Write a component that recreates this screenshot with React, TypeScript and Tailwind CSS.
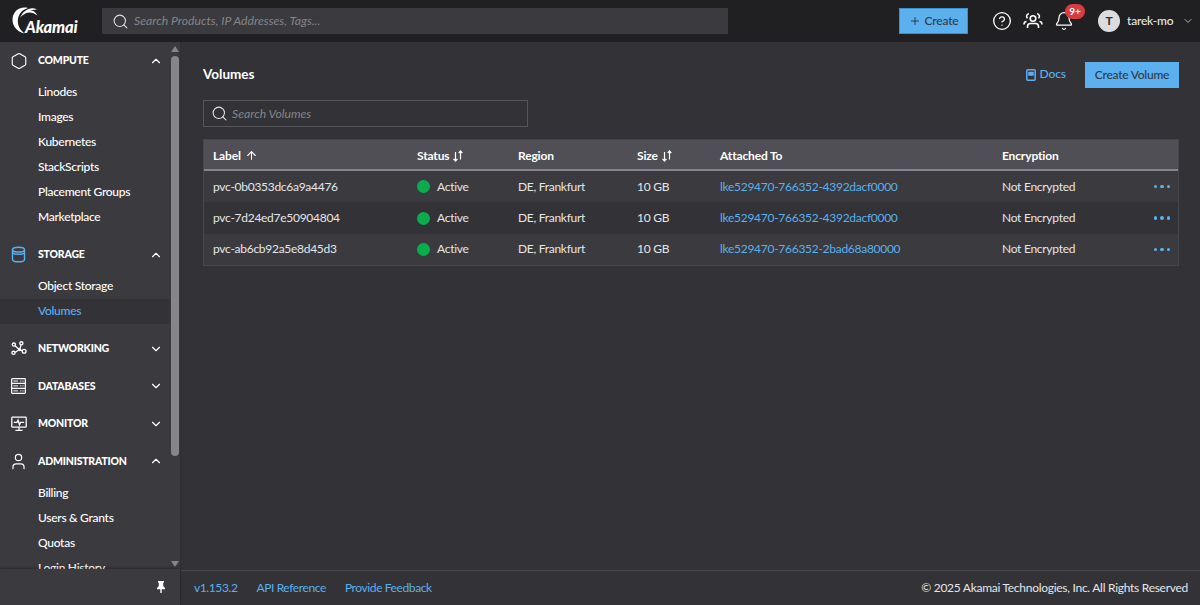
import React from 'react';
import { Search, Hexagon, ChevronUp, ChevronDown, Plus, CircleHelp, Bell, ArrowUp, User } from 'lucide-react';

const font = "font-['Lato',sans-serif]";

const rows = [
  { label: 'pvc-0b0353dc6a9a4476', attached: 'lke529470-766352-4392dacf0000' },
  { label: 'pvc-7d24ed7e50904804', attached: 'lke529470-766352-4392dacf0000' },
  { label: 'pvc-ab6cb92a5e8d45d3', attached: 'lke529470-766352-2bad68a80000' },
];

const SortIcon = () => (
  <svg width="12" height="12" viewBox="0 0 12 12" fill="none" stroke="currentColor" strokeWidth="1.2" className="ml-[3px]">
    <path d="M3.500 2v9M1.500 8.800l2 2.200 2-2.200" />
    <path d="M8.500 9.500V1M6.800 3L8.500 1l1.800 2" />
  </svg>
);

const Logo = () => (
  <div className="relative w-[66px] h-[36px]">
    <svg width="36" height="36" viewBox="0 0 36 36" className="absolute left-0 top-0" fill="#fff">
      <path d="M16 5C7 3 .5 9 .5 17 .5 24 6 29 12.500 30.500 8 27 5 22 6 16 7 10 11 6.500 16 5z" />
      <path d="M25 6.500C19 3 11 7 8 15 12 9.500 18 6.500 25 6.500z" />
      <path d="M25.500 12.500C22 6 14 5 10 13 14.500 8.500 20 8.500 25.500 12.500z" />
    </svg>
    <span className="absolute left-[13px] top-[13px] text-[16.500px] leading-[22px] font-black italic text-white tracking-[-0.2px]">
      Akamai
    </span>
  </div>
);

const StorageIcon = () => (
  <svg width="15" height="17" viewBox="0 0 20 22" fill="none" stroke="#5cb0ee" strokeWidth="1.900">
    <ellipse cx="10" cy="4.500" rx="8" ry="3.200" />
    <path d="M2 4.500v13c0 1.800 3.500 3.200 8 3.200s8-1.400 8-3.200v-13" />
    <path d="M2 9c1.500 1.200 5 1.800 8 1.800s6.500-.6 8-1.800" fill="#5cb0ee" fillOpacity=".25" />
  </svg>
);

const NetworkIcon = () => (
  <svg width="16" height="15" viewBox="0 0 20 19" fill="none" stroke="#fff" strokeWidth="1.700">
    <circle cx="3.500" cy="4.500" r="2" />
    <circle cx="13" cy="3" r="2" />
    <circle cx="3" cy="15" r="2" />
    <circle cx="16.500" cy="13" r="2.400" />
    <path d="M5 6l5.500 5M12.500 5l-1.500 6M5 14.500l5-3.500M11 11l3.500 1.500" />
    <circle cx="10.800" cy="11" r="1" fill="#fff" />
  </svg>
);

const DatabaseIcon = () => (
  <svg width="15" height="16" viewBox="0 0 16 17" fill="none" stroke="#fff" strokeWidth="1.300">
    <rect x=".7" y=".7" width="14.600" height="15.600" rx=".8" />
    <path d="M.7 5.800h14.600M.7 11h14.600" />
    <path d="M2.500 3.200h5M2.500 8.400h5M2.500 13.700h5" strokeWidth="1" />
    <path d="M10 3.200h1M12.300 3.200h1M10 8.400h1M12.300 8.400h1M10 13.700h1M12.300 13.700h1" strokeWidth="1.400" />
  </svg>
);

const MonitorIcon = () => (
  <svg width="16" height="16" viewBox="0 0 20 19" fill="none" stroke="#fff" strokeWidth="1.600">
    <rect x="1" y="1" width="18" height="12.500" rx="1" />
    <path d="M10 13.500v3.500M5.500 17.500h9" />
    <path d="M3.500 7.500h4l1.300-3 1.800 6 1.300-3h4.500" />
  </svg>
);

const PeopleIcon = () => (
  <svg width="20" height="18" viewBox="0 0 20 18" fill="none" stroke="#fff" strokeWidth="1.600">
    <circle cx="10" cy="6.500" r="2.800" />
    <path d="M4.500 16v-1.500c0-1.800 1.500-3 3-3h5c1.500 0 3 1.200 3 3V16" />
    <path d="M6 1.800a2.600 2.600 0 0 0-1.500 4.600M14 1.800a2.600 2.600 0 0 1 1.500 4.600M1 12.500c0-1.800 1-3 2.500-3M19 12.500c0-1.800-1-3-2.500-3" />
  </svg>
);

const DocsIcon = () => (
  <svg width="10" height="12" viewBox="0 0 10 12" fill="none" stroke="#5cb0ee" strokeWidth="1.500">
    <rect x=".8" y=".8" width="8.400" height="10.400" rx="1" />
    <path d="M3 3.500h4v2.500H3z" fill="#5cb0ee" />
  </svg>
);

const PinIcon = () => (
  <svg width="10" height="12" viewBox="0 0 10 12" fill="#fff">
    <path d="M2 0h6v1.200L7.200 2v3L9 7v1.300H5.700V12H4.300V8.300H1V7l1.800-2V2L2 1.200z" />
  </svg>
);

type NavGroupProps = {
  title: string;
  icon: React.ReactNode;
  open?: boolean;
  items?: string[];
  active?: string;
};

const NavGroup = ({ title, icon, open, items, active }: NavGroupProps) => (
  <div>
    <div className="flex items-center h-[37.500px] pl-[8.500px] pr-[7px]">
      <span className="w-[20px] h-[22px] flex items-center justify-center shrink-0">{icon}</span>
      <span className="ml-[9.500px] pt-[1px] flex-1 text-[10.500px] font-black text-white tracking-[-0.2px]">{title}</span>
      {open ? <ChevronUp size={14} className="text-white" /> : <ChevronDown size={14} className="text-white" />}
    </div>
    {items && (
      <div className="pb-[6.500px]">
        {items.map((item) => (
          <div
            key={item}
            className={`h-[25px] pl-[38px] flex items-center text-[12px] tracking-[-0.28px] font-medium whitespace-nowrap ${
              item === active ? 'bg-[#323237] text-[#5cb0ee]' : 'text-white'
            }`}
          >
            {item}
          </div>
        ))}
      </div>
    )}
  </div>
);

const Sidebar = () => (
  <aside className="w-[181px] shrink-0 bg-[#3a3a3f] border-r border-[#2f2f33] flex flex-col min-h-0">
    <div className="flex-1 flex min-h-0">
      <nav className="flex-1 min-w-0 overflow-hidden">
        <NavGroup
          title="COMPUTE"
          open
          icon={<Hexagon size={18} strokeWidth={1.500} className="text-white" />}
          items={['Linodes', 'Images', 'Kubernetes', 'StackScripts', 'Placement Groups', 'Marketplace']}
        />
        <NavGroup title="STORAGE" open icon={<StorageIcon />} items={['Object Storage', 'Volumes']} active="Volumes" />
        <NavGroup title="NETWORKING" icon={<NetworkIcon />} />
        <NavGroup title="DATABASES" icon={<DatabaseIcon />} />
        <NavGroup title="MONITOR" icon={<MonitorIcon />} />
        <NavGroup
          title="ADMINISTRATION"
          open
          icon={<User size={19} strokeWidth={1.500} className="text-white" />}
          items={['Billing', 'Users & Grants', 'Quotas', 'Login History']}
        />
      </nav>
      <div className="w-[10px] shrink-0 flex flex-col items-center pr-[1px]">
        <div className="mt-[4px] w-0 h-0 border-x-[4px] border-x-transparent border-b-[6px] border-b-[#85858a]" />
        <div className="mt-[4px] w-[8px] h-[400px] rounded bg-[#85858a]" />
        <div className="mt-auto mb-[2px] w-0 h-0 border-x-[4px] border-x-transparent border-t-[6px] border-t-[#85858a]" />
      </div>
    </div>
    <div className="h-[36px] shrink-0 bg-[#3a3a3f] shadow-[0_-1px_3px_rgba(0,0,0,0.3)] flex items-center justify-end pr-[14px] relative">
      <PinIcon />
    </div>
  </aside>
);

const Header = () => (
  <header className="h-[42px] shrink-0 bg-[#202023] flex items-center">
    <div className="w-[102px] pl-[12px] shrink-0">
      <Logo />
    </div>
    <div className="w-[626px] h-[26px] bg-[#3a3a3f] flex items-center pl-[10px]">
      <Search size={17} strokeWidth={1.500} className="text-[#e0e0e3]" />
      <span className="ml-[5px] text-[12.200px] italic text-[#85858a]">Search Products, IP Addresses, Tags...</span>
    </div>
    <div className="flex-1 flex items-center">
      <button className="ml-[171px] w-[69px] h-[26px] bg-[#5cb0ee] border border-[#3f8fd0] text-[#2d3a48] text-[12px] tracking-[-0.2px] font-medium flex items-center justify-center">
        <Plus size={12} className="mr-[4px]" />
        Create
      </button>
      <CircleHelp size={20} strokeWidth={1.600} className="ml-[24px] text-white" />
      <span className="ml-[11px]">
        <PeopleIcon />
      </span>
      <span className="relative ml-[11px] flex">
        <Bell size={20} strokeWidth={1.500} className="text-white" />
        <span className="absolute left-[11px] top-[-7px] h-[15px] w-[20px] rounded-full bg-[#d63c42] text-white text-[10px] font-bold flex items-center justify-center">
          9+
        </span>
      </span>
      <span className="ml-[24px] w-[22px] h-[22px] rounded-full bg-[#dcdce0] text-[#2d2d32] text-[12px] font-bold flex items-center justify-center">
        T
      </span>
      <span className="ml-[7px] text-[12px] tracking-[-0.2px] font-medium text-[#e6e6e9] whitespace-nowrap">tarek-mo</span>
      <ChevronDown size={12} className="ml-[9px] text-[#b0b0b5]" />
    </div>
  </header>
);

const cols = 'grid grid-cols-[204px_100px_119px_83px_282px_1fr] items-center';

const VolumesTable = () => (
  <div className="border border-[#46464b]">
    <div className={`${cols} h-[31px] pt-[2px] bg-[#4f4f55] border-b-2 border-[#85858a] text-[12px] tracking-[-0.15px] font-bold text-white`}>
      <div className="pl-[9px] flex items-center">
        Label
        <ArrowUp size={13} className="ml-[4px]" />
      </div>
      <div className="flex items-center pl-[9px]">
        Status
        <SortIcon />
      </div>
      <div className="pl-[10px]">Region</div>
      <div className="pl-[10px] flex items-center">
        Size
        <SortIcon />
      </div>
      <div className="pl-[10px]">Attached To</div>
      <div className="pl-[10px]">Encryption</div>
    </div>
    {rows.map((row, i) => (
      <div
        key={row.label}
        className={`${cols} h-[31.400px] text-[12px] tracking-[-0.28px] text-[#e6e6e9] ${i % 2 === 0 ? 'bg-[#3a3a3f]' : 'bg-[#323237]'}`}
      >
        <div className="pl-[9px]">{row.label}</div>
        <div className="pl-[9px] flex items-center">
          <span className="w-[13px] h-[13px] rounded-full bg-[#0aad4e] mr-[7px]" />
          Active
        </div>
        <div className="pl-[10px]">DE, Frankfurt</div>
        <div className="pl-[10px]">10 GB</div>
        <div className="pl-[10px] text-[#5cb0ee]">{row.attached}</div>
        <div className="pl-[10px] flex items-center justify-between pr-[8px]">
          Not Encrypted
          <span className="flex gap-[3px]">
            <span className="w-[3.500px] h-[3.500px] rounded-full bg-[#5cb0ee]" />
            <span className="w-[3.500px] h-[3.500px] rounded-full bg-[#5cb0ee]" />
            <span className="w-[3.500px] h-[3.500px] rounded-full bg-[#5cb0ee]" />
          </span>
        </div>
      </div>
    ))}
  </div>
);

export default function App() {
  return (
    <div className={`h-[605px] w-[1200px] overflow-hidden flex flex-col bg-[#323237] ${font}`}>
      <Header />
      <div className="flex-1 flex min-h-0">
        <Sidebar />
        <main className="flex-1 min-w-0 flex flex-col">
          <div className="flex-1 pl-[22px] pr-[21px]">
            <div className="flex items-center h-[45px] mt-[10px]">
              <h1 className="text-[13.500px] font-bold text-white mb-[1px]">Volumes</h1>
              <div className="ml-auto flex items-center">
                <DocsIcon />
                <span className="ml-[4px] mb-[1px] text-[12px] tracking-[-0.1px] font-medium text-[#5cb0ee]">Docs</span>
                <button className="ml-[19px] w-[94px] h-[26px] bg-[#5cb0ee] text-[#2d3a48] text-[12px] tracking-[-0.25px] font-medium">
                  Create Volume
                </button>
              </div>
            </div>
            <div className="mt-[3px] w-[325px] h-[27px] border border-[#55555a] flex items-center pl-[7px]">
              <Search size={17} strokeWidth={1.500} className="text-[#e6e6e9]" />
              <span className="ml-[4px] pt-[1px] text-[12.200px] italic text-[#85858a]">Search Volumes</span>
            </div>
            <div className="mt-[12px]">
              <VolumesTable />
            </div>
          </div>
          <footer className="h-[35px] shrink-0 border-t border-[#46464b] flex items-center justify-between pl-[13px] pr-[12px] text-[12px] tracking-[-0.28px]">
            <div className="flex gap-[19px] text-[#5cb0ee] tracking-[-0.4px]">
              <span>v1.153.2</span>
              <span>API Reference</span>
              <span>Provide Feedback</span>
            </div>
            <span className="text-[#e6e6e9]">© 2025 Akamai Technologies, Inc. All Rights Reserved</span>
          </footer>
        </main>
      </div>
    </div>
  );
}
